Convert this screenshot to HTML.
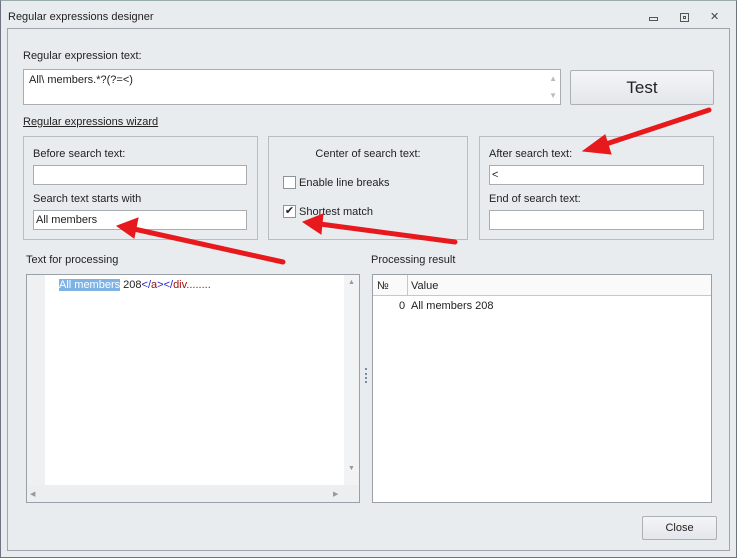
<!DOCTYPE html>
<html><head><style>
*{box-sizing:border-box;margin:0;padding:0}
body{width:737px;height:558px;background:#e9ecef;font-family:"Liberation Sans",sans-serif;font-size:11px;color:#222;position:relative;overflow:hidden}
.a{position:absolute}
.win{left:0;top:0;width:737px;height:558px;border:1px solid #6d7480;border-top-color:#9aa}
.inner{left:7px;top:28px;width:723px;height:523px;border:1px solid #a0a5ac}
.inp{background:#fff;border:1px solid #a9adb3}
.grp{border:1px solid #b9bdc3}
.btn{background:linear-gradient(#f4f5f7,#e3e6ea);border:1px solid #abb0b7;border-radius:2px;text-align:center}
.cb{width:13px;height:13px;border:1px solid #8d939b;background:#fff}
</style></head><body>
<div class="a win"></div>
<div class="a" style="left:8px;top:11px;font-size:11px">Regular expressions designer</div>
<div class="a" style="left:649px;top:17px;width:9px;height:4px;border:1px solid #555"></div>
<div class="a" style="left:680px;top:13px;width:9px;height:9px;border:1px solid #555"><div style="margin:2px;width:3px;height:3px;border:1px solid #555"></div></div>
<div class="a" style="left:710px;top:10px;font-size:11px;color:#444">✕</div>
<div class="a inner"></div>
<div class="a" style="left:23px;top:50px">Regular expression text:</div>
<div class="a inp" style="left:23px;top:69px;width:538px;height:36px"><div style="padding:4px 5px">All\ members.*?(?=&lt;)</div>
<div class="a" style="right:3px;top:4px;color:#bbb;font-size:8px">▲</div><div class="a" style="right:3px;top:21px;color:#bbb;font-size:8px">▼</div></div>
<div class="a btn" style="left:570px;top:70px;width:144px;height:35px;line-height:33px;font-size:17px">Test</div>
<div class="a" style="left:23px;top:116px;text-decoration:underline">Regular expressions wizard</div>
<div class="a grp" style="left:23px;top:136px;width:235px;height:104px"></div>
<div class="a grp" style="left:268px;top:136px;width:200px;height:104px"></div>
<div class="a grp" style="left:479px;top:136px;width:235px;height:104px"></div>
<div class="a" style="left:33px;top:148px">Before search text:</div>
<div class="a inp" style="left:33px;top:165px;width:214px;height:20px"></div>
<div class="a" style="left:33px;top:193px">Search text starts with</div>
<div class="a inp" style="left:33px;top:210px;width:214px;height:20px;padding:3px 2px">All members</div>
<div class="a" style="left:268px;top:148px;width:200px;text-align:center">Center of search text:</div>
<div class="a cb" style="left:283px;top:176px"></div>
<div class="a" style="left:299px;top:177px">Enable line breaks</div>
<div class="a cb" style="left:283px;top:205px;font-size:11px;line-height:11px;text-align:center">✔</div>
<div class="a" style="left:299px;top:206px">Shortest match</div>
<div class="a" style="left:489px;top:148px">After search text:</div>
<div class="a inp" style="left:489px;top:165px;width:215px;height:20px;padding:3px 2px">&lt;</div>
<div class="a" style="left:489px;top:193px">End of search text:</div>
<div class="a inp" style="left:489px;top:210px;width:215px;height:20px"></div>
<div class="a" style="left:26px;top:254px">Text for processing</div>
<div class="a" style="left:371px;top:254px">Processing result</div>
<div class="a inp" style="left:26px;top:274px;width:334px;height:229px;border-color:#9aa0a7;overflow:hidden">
<div class="a" style="left:0;top:0;width:18px;height:210px;background:#eef0f2"></div>
<div class="a" style="left:32px;top:4px"><span style="background:#7fb2e5;color:#fff">All members</span> 208<span style="color:#2222cc">&lt;/</span><span style="color:#a01010">a</span><span style="color:#2222cc">&gt;&lt;/</span><span style="color:#a01010">div........</span></div>
<div class="a" style="right:0;top:0;width:15px;height:210px;background:#f2f3f5"><div style="color:#999;font-size:7px;text-align:center;margin-top:4px">▲</div><div style="color:#999;font-size:7px;text-align:center;margin-top:179px">▼</div></div>
<div class="a" style="left:0;top:210px;width:332px;height:17px;background:#eceef0;color:#999;font-size:7px;padding:5px 3px">◀<span style="position:absolute;left:306px">▶</span></div>
</div>
<div class="a" style="left:365px;top:368px;width:2px;height:15px;border-left:2px dotted #7a8aa0"></div>
<div class="a inp" style="left:372px;top:274px;width:340px;height:229px;border-color:#9aa0a7">
<div class="a" style="left:0;top:0;width:338px;height:21px;border-bottom:1px solid #c4c8cd;background:#fafafa"></div>
<div class="a" style="left:34px;top:0;width:1px;height:21px;background:#c4c8cd"></div>
<div class="a" style="left:4px;top:5px">№</div><div class="a" style="left:38px;top:5px">Value</div>
<div class="a" style="left:26px;top:25px">0</div><div class="a" style="left:38px;top:25px">All members 208</div>
</div>
<div class="a btn" style="left:642px;top:516px;width:75px;height:24px;line-height:22px">Close</div>
<svg class="a" style="left:0;top:0" width="737" height="558">
<g stroke="#e8191d" stroke-width="5" stroke-linecap="round" fill="#e8191d">
<line x1="709" y1="110" x2="600" y2="146"/><polygon points="583,151 605,135 611,154" stroke-width="1"/>
<line x1="283" y1="262" x2="134" y2="229"/><polygon points="117,226 138,218 134,238" stroke-width="1"/>
<line x1="455" y1="242" x2="320" y2="224"/><polygon points="303,222 323,214 321,234" stroke-width="1"/>
</g></svg>
</body></html>
